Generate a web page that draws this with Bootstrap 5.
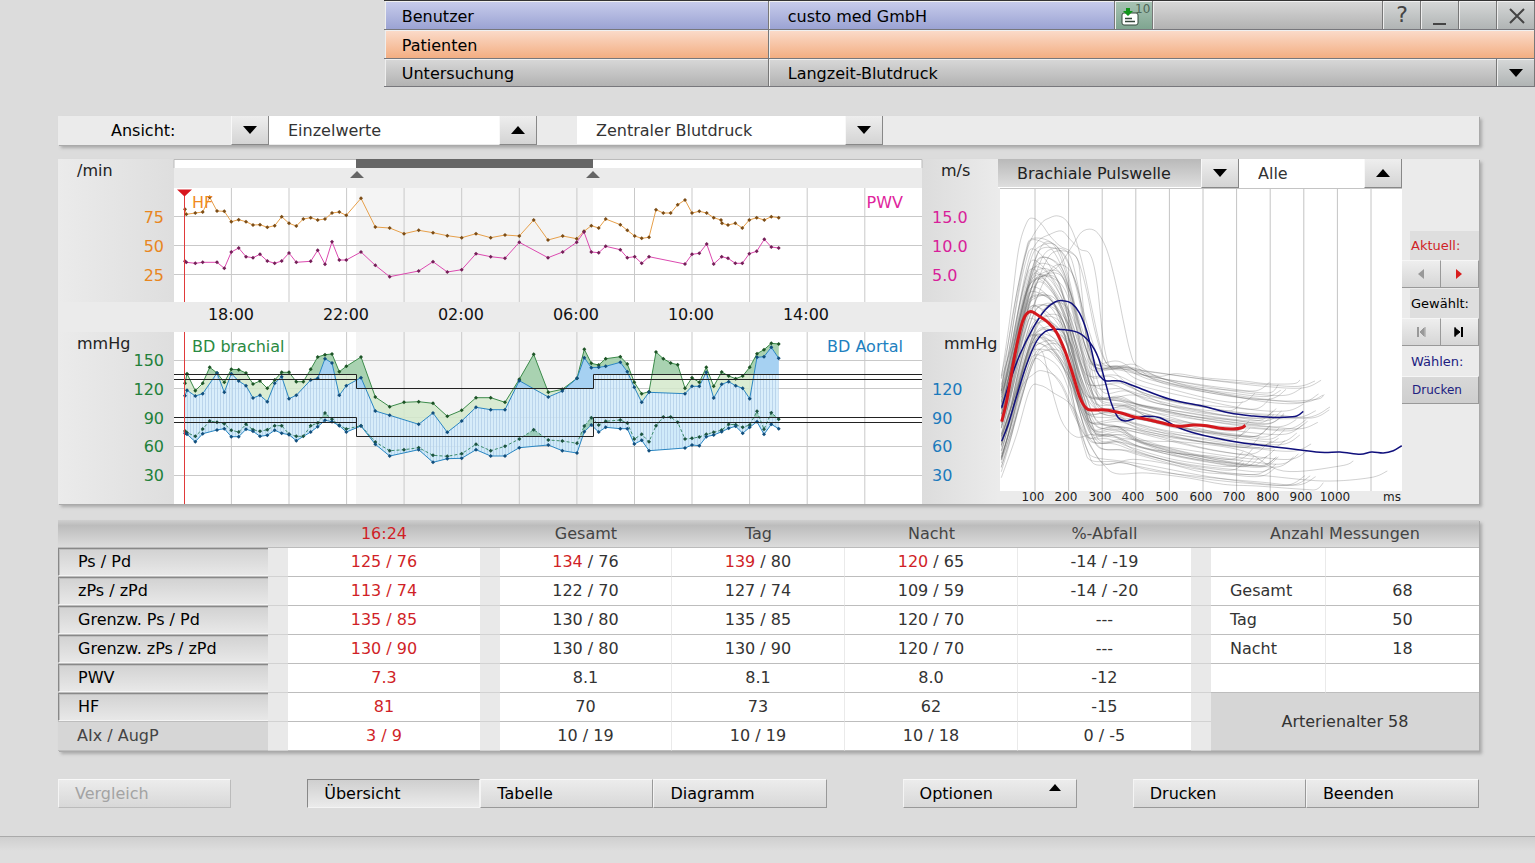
<!DOCTYPE html>
<html lang="de">
<head>
<meta charset="utf-8">
<meta name="viewport" content="width=device-width, initial-scale=1">
<title>Langzeit-Blutdruck</title>
<link href="https://cdn.jsdelivr.net/npm/bootstrap@5.3.0/dist/css/bootstrap.min.css" rel="stylesheet">
<style>
body{font-family:"DejaVu Sans",Verdana,sans-serif;font-size:16px;line-height:24px;color:#333;background:#dcdcdc}
button,select{font:inherit;border-radius:0;border:0;margin:0;padding:0;color:#000}
svg{display:block}
.topbar{margin-left:25%;width:75%;border-top:1px solid #333;color:#000}
.bar{height:29px;border-bottom:1px solid #77777c;padding-left:1px}
.bar>*{border-left:1px solid #eee;border-right:1px solid #777;box-shadow:inset 0 1px #f0f0f0}
.bar-last{height:28px}
.title-cell{flex:0 0 384px;padding:4px 0 0 16px;line-height:24px;text-align:left;background:none}
.value-cell{padding-left:18px;line-height:32px}
.bar-last .value-cell{line-height:30px}
.bar-last .title-cell{padding-top:3px}
.user-cell{flex:0 1 346px}
.tone.blue{background:linear-gradient(#c8cdec,#9ba3d3)}
.orange>.tone{background:linear-gradient(#fbdccb,#f3ae82)}
.grey>.tone,.tone.grey{background:linear-gradient(#d8d8d8,#b2b2b2)}
.tool{flex:0 0 38px;background:linear-gradient(#d6d8d8,#b0b4b4);display:flex;align-items:center;justify-content:center}
.tool.inbox{background:linear-gradient(#a9c4b5,#7fa590)}
.help{font-size:22px;color:#444}
.work{padding:29px 56px 0 58px}
.panel{background:#ebebeb;box-shadow:1px 1px 0 #aaa,3px 3px 3px #aaa}
.charts{margin-top:14px}
.arrow{flex:0 0 38px;height:29px;background:linear-gradient(#eee,#d4d4d4);border-right:1px solid #888;border-bottom:1px solid #888;border-left:1px solid #f8f8f8;display:flex;align-items:center;justify-content:center}
.choice{appearance:none;background:#fff;height:28px;color:#333;padding:2px 0 0 19px;min-width:0}
.choice.dim{background:linear-gradient(#b9b9b9,#dedede);color:#222}
.view-label{flex:0 0 173px;padding-left:53px;line-height:29px;color:#000}
.sel-a{flex:0 1 230px}.sel-b{flex:0 1 268px}
.sel-c{flex:1 1 202px}.sel-d{flex:1 1 124px}
.trend{flex:940 1 0;min-width:0}
.pulse{flex:404 1 0;min-width:0}
.side{flex:0 0 77px;font-size:13px;padding-top:72px}
.side-label{display:block;height:29px;line-height:30px;margin-left:8px;padding-left:1px;background:#dedede;white-space:nowrap}
.side-label.plain{background:none;color:#202080}
.step{flex:1;height:28px;margin-bottom:1px;background:linear-gradient(#eee,#d6d6d6);border-right:1px solid #999;border-bottom:1px solid #999;border-top:1px solid #f6f6f6;display:flex;align-items:center;justify-content:center}
.print{font-size:12px;color:#202080;display:block;width:100%;text-align:left;padding-left:10px;background:linear-gradient(#d8d8d8,#cecece)}
.values{width:100%;table-layout:fixed;border-collapse:separate;border-spacing:0;text-align:center}
.values th{font-weight:400}
.values thead th{height:28px;padding:0;line-height:26px;color:#444;border-bottom:1px solid #bbb}
.values thead tr{background:linear-gradient(#cfcfcf,#bcbcbc 20%,#dedede)}
.values tbody td,.values tbody th{height:29px;padding:0;line-height:28px;background:#fff;border-bottom:1px solid #bdbdbd}
.values tbody .gap{background:#e9e9e9;border-color:#d2d2d2}
.values tbody .rule{border-right:1px solid #eaeaea}
.values .red,.red{color:#d01f27!important}
.rowbtn{display:block;width:100%;height:28px;text-align:left;padding-left:19px;line-height:26px;background:linear-gradient(#d2d2d2,#e8e8e8);border-top:1px solid #888;border-left:1px solid #888;border-bottom:1px solid #f4f4f4;box-shadow:inset 1px 1px #bebebe}
.values tbody .rowhead{background:#d6d6d6;text-align:left}
.values tbody .off{padding-left:19px;color:#444}
.values tbody .tleft{text-align:left;padding-left:19px}
.values tbody .age{background:#d6d6d6}
.actions{display:grid;grid-template-columns:173fr 76fr 519fr 76fr 174fr 56fr 346fr;margin-top:28px}
.act{flex:1;height:29px;text-align:left;padding-left:16px;line-height:28px;background:linear-gradient(#ececec,#d8d8d8);border:1px solid;border-color:#f8f8f8 #999 #999 #f4f4f4;position:relative}
.act.on{background:linear-gradient(#cfcfcf,#ebebeb);border-color:#888 #f4f4f4 #f4f4f4 #888}
.act:disabled{color:#a3a3a3;border-right-color:#bbb;border-bottom-color:#bbb}
.act svg{position:absolute;right:14px;top:4px}
.foot{margin-top:28px;border-top:1px solid #aaa;background:linear-gradient(#cfcfcf,#dedede 14px)}
</style>
</head>
<body class="d-flex flex-column min-vh-100">
<header class="topbar">
  <div class="bar d-flex">
    <button class="title-cell tone blue">Benutzer</button>
    <div class="value-cell user-cell tone blue">custo med GmbH</div>
    <button class="tool inbox" aria-label="10 Eingänge">
      <svg width="36" height="28" viewBox="0 0 36 28"><rect x="6" y="12" width="16" height="12" rx="2" fill="#fff" stroke="#35483c"/><path d="M9 17.500h7M9 20.500h10" stroke="#35483c" stroke-width="1.400"/><path d="M10 7h4v3h3l-5 5-5-5h3z" fill="#11951b"/><text x="19" y="12" font-size="12" font-family="DejaVu Sans" fill="#4d6657">10</text></svg>
    </button>
    <div class="tone grey flex-grow-1"></div>
    <button class="tool help" aria-label="Hilfe">?</button>
    <button class="tool" aria-label="Minimieren"><svg width="20" height="22" viewBox="0 0 20 22"><path d="M3 20h13" stroke="#444" stroke-width="2"/></svg></button>
    <div class="tool"></div>
    <button class="tool" aria-label="Schließen"><svg width="20" height="22" viewBox="0 0 20 22"><path d="M4 5l14 14M18 5L4 19" stroke="#444" stroke-width="2"/></svg></button>
  </div>
  <div class="bar orange d-flex">
    <button class="title-cell tone">Patienten</button><div class="tone flex-grow-1"></div>
  </div>
  <div class="bar bar-last grey d-flex">
    <button class="title-cell tone">Untersuchung</button>
    <div class="value-cell tone flex-grow-1">Langzeit-Blutdruck</div>
    <button class="tool" aria-label="Untersuchung wählen"><svg width="14" height="8"><path d="M0 0h14L7 8z"/></svg></button>
  </div>
</header>

<main class="work">
  <div class="panel d-flex">
    <label class="view-label" for="view">Ansicht:</label>
    <button class="arrow" aria-label="Zurück"><svg width="14" height="8"><path d="M0 0h14L7 8z"/></svg></button>
    <select class="choice sel-a" id="view"><option>Einzelwerte</option></select>
    <button class="arrow me-4" aria-label="Weiter"><svg width="14" height="8"><path d="M0 8h14L7 0z"/></svg></button>
    <select class="choice sel-b ms-3" aria-label="Blutdruck"><option>Zentraler Blutdruck</option></select>
    <button class="arrow" aria-label="Öffnen"><svg width="14" height="8"><path d="M0 0h14L7 8z"/></svg></button>
  </div>

  <section class="panel charts d-flex">
    <div class="trend"><svg id="trend" viewBox="0 0 940 345" width="100%" font-family="DejaVu Sans" font-size="16" role="img" aria-label="Verlauf"></svg></div>
    <div class="pulse">
      <div class="d-flex bg-white">
        <select class="choice dim sel-c" aria-label="Pulswelle"><option>Brachiale Pulswelle</option></select>
        <button class="arrow" aria-label="Pulswelle wählen"><svg width="14" height="8"><path d="M0 0h14L7 8z"/></svg></button>
        <select class="choice sel-d" aria-label="Auswahl"><option>Alle</option></select>
        <button class="arrow" aria-label="Auswahl wählen"><svg width="14" height="8"><path d="M0 8h14L7 0z"/></svg></button>
      </div>
      <svg id="pulse" viewBox="0 0 404 316" width="100%" font-family="DejaVu Sans" font-size="12" role="img" aria-label="Pulswellen"></svg>
    </div>
    <div class="side">
      <div class="side-label red">Aktuell:</div>
      <div class="d-flex"><button class="step" aria-label="Vorherige"><svg width="6" height="12"><path d="M6 1v10L0 6z" fill="#999"/></svg></button><button class="step" aria-label="Nächste"><svg width="6" height="12"><path d="M0 1v10l6-5z" fill="#d81e1e"/></svg></button></div>
      <div class="side-label text-black">Gewählt:</div>
      <div class="d-flex"><button class="step" aria-label="Erste"><svg width="10" height="12"><path d="M2 1v10" stroke="#999" stroke-width="2"/><path d="M9 1v10M8 2v8L4 6z" fill="#999" stroke="#999"/></svg></button><button class="step" aria-label="Letzte"><svg width="10" height="12"><path d="M8 1v10" stroke="#000" stroke-width="2"/><path d="M1 1v10M1 2v8l5-4z" fill="#000" stroke="#000"/></svg></button></div>
      <div class="side-label plain">Wählen:</div>
      <button class="step print">Drucken</button>
    </div>
  </section>

  <section class="panel mt-3">
    <table class="values">
      <colgroup id="cols"></colgroup>
      <thead><tr><th></th><th></th><th class="red">16:24</th><th></th><th>Gesamt</th><th>Tag</th><th>Nacht</th><th>%-Abfall</th><th></th><th colspan="2">Anzahl Messungen</th></tr></thead>
      <tbody>
        <tr><th class="rowhead"><button class="rowbtn">Ps / Pd</button></th><td class="gap"></td><td class="red">125 / 76</td><td class="gap"></td><td class="rule"><span class="red">134</span> / 76</td><td class="rule"><span class="red">139</span> / 80</td><td class="rule"><span class="red">120</span> / 65</td><td>-14 / -19</td><td class="gap"></td><td class="rule"></td><td></td></tr>
        <tr><th class="rowhead"><button class="rowbtn">zPs / zPd</button></th><td class="gap"></td><td class="red">113 / 74</td><td class="gap"></td><td class="rule">122 / 70</td><td class="rule">127 / 74</td><td class="rule">109 / 59</td><td>-14 / -20</td><td class="gap"></td><td class="rule tleft">Gesamt</td><td>68</td></tr>
        <tr><th class="rowhead"><button class="rowbtn">Grenzw. Ps / Pd</button></th><td class="gap"></td><td class="red">135 / 85</td><td class="gap"></td><td class="rule">130 / 80</td><td class="rule">135 / 85</td><td class="rule">120 / 70</td><td>---</td><td class="gap"></td><td class="rule tleft">Tag</td><td>50</td></tr>
        <tr><th class="rowhead"><button class="rowbtn">Grenzw. zPs / zPd</button></th><td class="gap"></td><td class="red">130 / 90</td><td class="gap"></td><td class="rule">130 / 80</td><td class="rule">130 / 90</td><td class="rule">120 / 70</td><td>---</td><td class="gap"></td><td class="rule tleft">Nacht</td><td>18</td></tr>
        <tr><th class="rowhead"><button class="rowbtn">PWV</button></th><td class="gap"></td><td class="red">7.3</td><td class="gap"></td><td class="rule">8.1</td><td class="rule">8.1</td><td class="rule">8.0</td><td>-12</td><td class="gap"></td><td class="rule"></td><td></td></tr>
        <tr><th class="rowhead"><button class="rowbtn">HF</button></th><td class="gap"></td><td class="red">81</td><td class="gap"></td><td class="rule">70</td><td class="rule">73</td><td class="rule">62</td><td>-15</td><td class="gap"></td><td class="age" colspan="2" rowspan="2">Arterienalter 58</td></tr>
        <tr><th class="rowhead off">AIx / AugP</th><td class="gap"></td><td class="red">3 / 9</td><td class="gap"></td><td class="rule">10 / 19</td><td class="rule">10 / 19</td><td class="rule">10 / 18</td><td>0 / -5</td><td class="gap"></td></tr>
      </tbody>
    </table>
  </section>

  <nav class="actions">
    <div class="d-flex"><button class="act" disabled>Vergleich</button></div><span></span>
    <div class="d-flex"><button class="act on">Übersicht</button><button class="act">Tabelle</button><button class="act">Diagramm</button></div><span></span>
    <div class="d-flex"><button class="act">Optionen<svg width="14" height="8"><path d="M1 7h12L7 0z"/></svg></button></div><span></span>
    <div class="d-flex"><button class="act">Drucken</button><button class="act">Beenden</button></div>
  </nav>
</main>
<footer class="foot flex-grow-1"></footer>

<script>
const parse = s => s.trim().split(/\s+/).map(p => p.split(',').map(Number));
const shift = (s, dx) => parse(s).map(([x, y]) => [x + dx, y]);
const line = pts => 'M' + pts.map(p => p[0].toFixed(1) + ',' + p[1].toFixed(1)).join('L');

document.getElementById('cols').innerHTML = [210,20,192,20,172,173,173,173,20,115,153]
  .map(w => `<col style="width:${(w / 14.21).toFixed(3)}%">`).join('');

/* Trend: samples are stored at three units per pixel */
const upper = pts => pts.map(([x, y]) => [x / 3 + 112, y / 3 - 4]);
const lower = pts => pts.map(([x, y]) => [x / 3 + 112, y / 3 + 171]);
const hf = upper([...parse('45,163 49,178 76,174 98,171 119,127 141,168 163,169 184,200 206,194 228,200 249,210 270,209 292,217 314,212 335,185 357,205 379,213 400,192 422,188 443,195 465,192 486,174 508,171 529,181 573,130 616,216 659,219 702,236 746,226 789,233 832,242 875,248 918,236 962,248 1005,240 1048,243 1091,195 1134,255'),
 ...shift('68,243 110,251 132,229 154,212 176,219 197,192 241,209 262,226 284,243 305,250 327,247 348,164 370,174 392,174 413,149 435,135 456,174 478,169 500,174 521,188 543,195 546,205 564,210 586,205 607,219 628,195 650,188 673,195 694,185 716,188', 1110)]);
const pwv = upper([...parse('45,319 49,322 76,325 98,322 141,322 163,340 184,291 206,279 228,305 249,308 270,298 292,318 314,325 335,318 357,294 379,322 422,319 443,286 465,328 486,260 508,315 529,315 573,291 616,331 659,365 746,348 789,320 832,351 875,344 918,296 962,305 1005,310 1048,262 1134,308'),
 ...shift('68,291 110,262 132,231 154,291 176,293 197,274 241,284 262,308 284,305 305,325 327,305 435,327 456,298 478,295 500,267 521,327 545,305 564,310 586,325 607,325 628,296 650,289 673,253 694,276 716,279', 1110)]);
const ps = lower([...parse('45,160 51,131 76,182 98,160 119,112 141,129 163,157 184,118 206,119 228,129 249,162 270,153 292,175 314,150 335,127 357,127 379,155 400,155 422,118 443,81 465,74 486,72 508,125 529,109 573,81 616,201 659,230 702,217 746,215 789,220 832,259 875,241 918,203'),
 ...shift('32,203 75,217 118,148 161,73 205,187 247,178 291,145 313,58 334,100 356,105 377,86 421,80 442,102 463,157 485,191 507,185 528,66 550,86 572,99 593,104 615,175 636,143 658,157 679,112 701,169 725,126 746,138 767,146 788,138 809,112 831,71 852,59 874,40 896,42', 930)]);
const zps = lower([...parse('45,197 51,181 76,198 98,191 141,129 163,187 184,131 206,153 228,167 249,204 270,196 292,215 314,160 335,140 357,206 379,196 422,150 443,145 465,86 486,99 508,196 529,167 573,143 616,243 659,256 746,283 789,249 832,307 875,273 918,232'),
 ...shift('32,239 75,239 118,152 205,201 247,183 291,145 313,83 334,113 356,112 377,109 421,97 442,125 463,172 485,217 507,187 615,191 636,169 658,169 679,127 701,204 725,163 746,155 767,167 788,175 809,206 831,82 852,80 874,52 896,85', 930)]);
const pd = lower([...parse('45,303 51,308 76,319 98,297 119,273 141,277 163,281 184,301 206,306 228,283 249,299 270,304 292,299 314,287 335,287 357,312 379,319 400,319 422,287 443,279 465,249 486,268 508,286 529,297 573,287 616,336 659,362 702,359 746,353 789,376 832,379 875,371 918,343'),
 ...shift('32,362 75,349 118,327 161,299 205,330 247,333 291,340 313,288 334,263 356,285 377,274 421,270 442,279 463,327 485,313 507,335 528,287 550,261 572,261 593,277 615,327 636,325 658,321 679,313 701,307 725,300 746,283 767,284 788,292 809,285 831,244 852,298 874,248 896,268', 930)]);
const zpd = lower([...parse('45,310 51,313 76,335 98,311 141,300 163,296 184,320 206,320 228,298 249,304 270,319 292,316 314,301 335,310 357,314 379,332 422,306 443,290 465,271 486,275 508,287 529,306 573,288 616,343 659,378 746,359 789,397 832,386 875,385 918,359'),
 ...shift('32,378 75,378 118,353 205,345 247,362 291,369 313,305 334,285 356,306 377,292 421,296 442,296 463,342 485,331 507,362 615,354 636,345 658,347 679,320 701,315 725,305 746,295 767,289 788,310 809,292 831,275 852,313 874,283 896,296', 930)]);

const dots = (pts, c) => `<path fill="${c}" d="${pts.map(([x, y]) => `M${(x - 2).toFixed(1)},${y.toFixed(1)}l2,-2 2,2 -2,2z`).join('')}"/>`;
const stroke = (pts, c, extra = '') => `<path d="${line(pts)}" fill="none" stroke="${c}" ${extra}/>`;
const band = (a, b, fill, extra = '') => `<path d="${line([...a, ...[...b].reverse()])}Z" fill="${fill}" ${extra}/>`;
const txt = (x, y, s, c, a = 'start') => `<text x="${x}" y="${y}" fill="${c}" text-anchor="${a}">${s}</text>`;

let g = `<defs>
<linearGradient id="strip"><stop offset="0" stop-color="#ebebeb"/><stop offset="1" stop-color="#dedede"/></linearGradient>
<linearGradient id="strip2"><stop offset="0" stop-color="#dcdcdc"/><stop offset="1" stop-color="#ebebeb"/></linearGradient>
<pattern id="hatch" width="3" height="8" patternUnits="userSpaceOnUse"><rect width="3" height="8" fill="#cfeafa" fill-opacity=".8"/><rect width="1" height="8" fill="#b4cfe8" fill-opacity=".8"/></pattern>
<clipPath id="sysOver"><path d="M116 174H864V215.500H536V230H299V215.500H116z"/></clipPath>
<clipPath id="diaOver"><path d="M116 240H864V258.500H536V277.500H299V258.500H116z"/></clipPath></defs>
<rect width="116" height="143" fill="url(#strip)"/><rect y="173" width="116" height="172" fill="url(#strip)"/>
<rect x="864" width="76" height="143" fill="url(#strip2)"/><rect x="864" y="173" width="76" height="172" fill="url(#strip2)"/>
<path d="M116 1H864V9H116z" fill="#fff"/><path d="M116 9V.5H864V9" fill="none" stroke="#bbb"/>
<rect x="298" y="0" width="237" height="9" fill="#666"/>
<path d="M292 19h14l-7-7zM528 19h14l-7-7z" fill="#666"/>
<path d="M116 29H864V143H116zM116 173H864V345H116z" fill="#fff"/>
<path d="M298 29H535V143H298zM298 173H535V345H298z" fill="#f4f4f4"/>`;
let grid = '';
for (let i = 0; i < 12; i++) { const x = (173.4 + i * 57.58).toFixed(1); grid += `M${x} 29V143M${x} 173V345`; }
for (const y of [57.5, 86.5, 115.5, 201.5, 229.5, 258.5, 287.5, 316.5]) grid += `M116 ${y}H864`;
g += `<path d="${grid}" stroke="#c9c9c9" fill="none"/>`;
g += band(ps, zps, '#d3e9cb', 'fill-opacity=".85"') + band(ps, zps, '#a9d2b1', 'clip-path="url(#sysOver)"')
  + band(pd, zpd, '#c9edf7', 'fill-opacity=".8"') + band(zps, zpd, 'url(#hatch)')
  + band(zps, zpd, '#a6d1f2', 'clip-path="url(#sysOver)"') + band(pd, zpd, '#9ccdbb', 'clip-path="url(#diaOver)"');
g += stroke(ps, '#3c8b4b') + stroke(pd, '#3c8b6b', 'stroke-dasharray="3 2"') + stroke(zps, '#2a86c2') + stroke(zpd, '#2a86c2');
g += dots(ps, '#1d5426') + dots(pd, '#1d5440') + dots(zps, '#124f7d') + dots(zpd, '#124f7d');
g += `<path d="M116 215.500H298.500V229.500H535.500V215.500H864M116 220.500H298.500M535.500 220.500H864M116 258.500H298.500V277.500H535.500V258.500H864M116 263.500H298.500M535.500 263.500H864" fill="none" stroke="#222"/>`;
g += stroke(hf, '#e7a04a') + dots(hf, '#7c4d16') + stroke(pwv, '#dc4ab0') + dots(pwv, '#751f58');
g += `<path d="M126.500 31V143M126.500 173V345" stroke="#e03a3a"/><path d="M119 30.500h15l-7.500 7z" fill="#d8161e"/>`;
g += txt(19, 17, '/min', '#222') + txt(883, 17, 'm/s', '#222') + txt(19, 190, 'mmHg', '#222') + txt(886, 190, 'mmHg', '#222');
g += txt(134, 49, 'HF', '#f08a1e') + txt(845, 49, 'PWV', '#e0249c', 'end') + txt(134, 193, 'BD brachial', '#2a8a42') + txt(845, 193, 'BD Aortal', '#2080c0', 'end');
['75', '50', '25'].forEach((t, i) => g += txt(106, 64 + i * 29, t, '#e8861e', 'end'));
['15.0', '10.0', '5.0'].forEach((t, i) => g += txt(874, 64 + i * 29, t, '#d81f9a'));
['150', '120', '90', '60', '30'].forEach((t, i) => { const y = Math.round(207 + i * 28.75); g += txt(106, y, t, '#21803a', 'end') + (i ? txt(874, y, t, '#1b7abc') : ''); });
['18:00', '22:00', '02:00', '06:00', '10:00', '14:00'].forEach((t, i) => g += txt(173 + i * 115, 161, t, '#111', 'middle'));
document.getElementById('trend').innerHTML = g;

/* Pulse waves */
const smooth = pts => {
  const p = pts.map(([x, y]) => [x / 3 - 8, y / 3 - 37]);
  let d = `M${p[0][0].toFixed(1)},${p[0][1].toFixed(1)}`;
  for (let i = 0; i < p.length - 1; i++) {
    const a = p[i - 1] || p[i], b = p[i], c = p[i + 1], e = p[i + 2] || c;
    d += `C${[b[0] + (c[0] - a[0]) / 6, b[1] + (c[1] - a[1]) / 6, c[0] - (e[0] - b[0]) / 6, c[1] - (e[1] - b[1]) / 6, c[0], c[1]].map(v => v.toFixed(1))}`;
  }
  return d;
};
let seed = 11;
const rnd = () => (seed = (seed * 16807) % 2147483647) / 2147483647;
let w = '<rect x="2" width="402" height="303" fill="#fff"/><path fill="none" stroke="#c4c4c4" d="M2 .5H404';
for (let i = 0; i < 11; i++) w += `M${(37 + i * 33.6).toFixed(1)} 0V303`;
w += '"/><g fill="none" stroke="#555" stroke-opacity=".27">';
const waves = 60;
for (let i = 0; i < waves; i++) {
  const q = i / (waves - 1), j = k => (rnd() - .5) * k;
  const s = 700 + 240 * q + j(50), pk = 265 + 350 * q + j(40);
  const px = 125 + rnd() * rnd() * 100, hump = px + 40 + rnd() * 25, hy = pk + j(70) + 22;
  const tx = 295 + rnd() * 55, t = Math.min(955, Math.max(640, 655 + 250 * q + j(110)));
  const fx = f => hump + (tx - hump) * f, fy = f => hy + (t - hy) * f;
  const end = 750 + rnd() * 330 * (rnd() * .6 + .4), ey = Math.min(1000, t + 80 + j(50));
  const tail = f => tx + (end - tx) * f;
  w += `<path d="${smooth([[34, s], [34 + (px - 34) * .25, s - (s - pk) * .27], [34 + (px - 34) * .5, s - (s - pk) * .6], [34 + (px - 34) * .78, s - (s - pk) * .9], [px, pk], [hump, hy], [fx(.3), fy(.24)], [fx(.55), fy(.6)], [fx(.8), fy(.9)], [tx, t], [tail(.12), t + j(24)], [tail(.25), t + (ey - t) * .3], [tail(.5), t + (ey - t) * .68 + j(8)], [tail(.75), ey - 5 + j(6)], [tail(.92), ey + 2], [end, ey - 14 - rnd() * 16]])}"/>`;
}
for (const c of [
 '34,680 60,500 85,300 110,215 130,202 155,220 180,255 210,285 240,300 265,330 290,420 315,540 340,620 370,650 430,650 540,690 640,710 760,720 840,725 865,700',
 '34,720 70,480 110,300 150,222 180,200 205,195 230,210 255,260 280,350 305,470 335,600 365,650 430,640 500,675 560,668 640,680 760,690 830,698 910,698 930,687',
 '34,740 80,540 120,400 170,370 210,340 250,280 275,243 305,235 330,255 355,310 380,410 400,510 420,600 440,645 500,690 600,715 760,740 880,750 980,745 1003,730',
 '34,760 70,560 110,350 140,275 180,250 215,240 240,265 270,295 300,310 320,390 345,600 380,670 480,740 600,780 780,800 950,800 1020,768',
 '34,980 80,850 120,715 150,703 190,725 250,770 300,880 340,940 380,968 470,966 590,980 700,1000 800,1005 940,1015 980,1015 1000,995',
 '34,950 90,760 130,620 155,600 175,670 195,750 220,820 260,858 310,850 380,860 480,870 600,875 760,900 880,960 1050,945 1090,930',
 '34,900 90,720 130,670 160,660 210,690 260,800 310,900 350,940 430,925 540,940 650,965 800,972 1000,990 1140,980 1192,960'
]) w += `<path d="${smooth(parse(c))}"/>`;
w += '</g><g fill="none" stroke="#10107c" stroke-width="1.500">';
w += `<path d="${smooth(parse('35,770 60,690 90,610 130,530 165,477 195,453 220,449 245,457 268,485 290,540 305,600 320,660 340,686 355,690 390,690 440,708 540,745 640,766 720,786 790,795 840,799 880,799 920,795 940,781'))}"/>`;
w += `<path d="${smooth(parse('35,870 55,820 80,735 110,640 140,570 165,542 190,535 225,536 265,545 300,575 325,620 345,690 365,760 385,800 405,810 430,804 465,796 510,800 560,827 610,845 680,862 740,873 790,880 890,892 990,904 1050,903 1110,910 1145,903 1180,906 1210,899 1235,884'))}"/></g>`;
w += `<path fill="none" stroke="#d4181d" stroke-width="3" d="${smooth(parse('35,812 50,750 75,610 95,520 110,488 126,482 150,497 175,515 200,545 225,600 250,675 270,740 290,773 310,777 345,777 390,785 430,797 480,807 540,822 570,826 610,822 650,824 690,832 730,834 755,830 766,823'))}"/>`;
for (let i = 1; i <= 10; i++) w += `<text x="${1 + Math.round(i * 33.6)}" y="313" text-anchor="middle" fill="#222">${i * 100}</text>`;
w += '<text x="403" y="313" text-anchor="end" fill="#222">ms</text>';
document.getElementById('pulse').innerHTML = w;
</script>
<script src="https://cdn.jsdelivr.net/npm/bootstrap@5.3.0/dist/js/bootstrap.bundle.min.js"></script>
</body>
</html>
